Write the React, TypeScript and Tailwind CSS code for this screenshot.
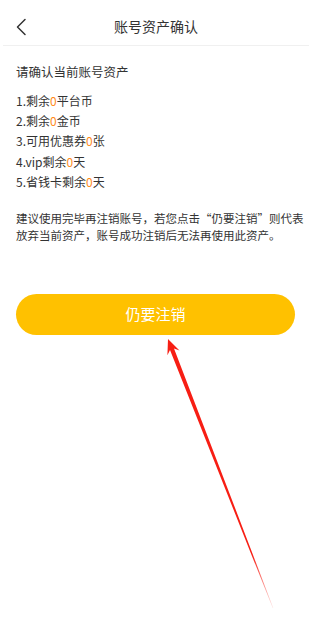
import React from "react";

const font = { fontFamily: '"Noto Sans CJK SC", "Noto Sans", sans-serif' };

function Arrow() {
  const tip = [168, 339];
  const tail = [273, 608];
  const dx = tail[0] - tip[0];
  const dy = tail[1] - tip[1];
  const len = Math.hypot(dx, dy);
  const ux = dx / len, uy = dy / len;
  const px = uy, py = -ux;
  const headLen = 15, headHalf = 6.5;
  const bc = [tip[0] + ux * headLen, tip[1] + uy * headLen];
  const notch = [tip[0] + ux * (headLen - 4), tip[1] + uy * (headLen - 4)];
  const shaftHalf = 2.2;
  const head = [
    tip,
    [bc[0] + px * headHalf, bc[1] + py * headHalf],
    [notch[0] + px * shaftHalf, notch[1] + py * shaftHalf],
    [tail[0] + px * 0.3, tail[1] + py * 0.3],
    [tail[0] - px * 0.3, tail[1] - py * 0.3],
    [notch[0] - px * shaftHalf, notch[1] - py * shaftHalf],
    [bc[0] - px * headHalf, bc[1] - py * headHalf],
  ];
  const pts = head.map((p) => `${p[0].toFixed(1)},${p[1].toFixed(1)}`).join(" ");
  return (
    <svg className="absolute left-0 top-0 pointer-events-none" width="312" height="644" viewBox="0 0 312 644">
      <defs>
        <linearGradient id="ag" gradientUnits="userSpaceOnUse" x1={tip[0]} y1={tip[1]} x2={tail[0]} y2={tail[1]}>
          <stop offset="0" stopColor="#f71e14" />
          <stop offset="0.8" stopColor="#f71e14" />
          <stop offset="1" stopColor="#f71e14" stopOpacity="0.1" />
        </linearGradient>
      </defs>
      <polygon points={pts} fill="url(#ag)" />
    </svg>
  );
}

export default function App() {
  const O = ({ children }: { children: React.ReactNode }) => (
    <span className="text-[#ff8a1c]">{children}</span>
  );
  return (
    <div className="relative w-[312px] h-[644px] bg-white overflow-hidden text-[#333333]" style={font}>
      <div className="relative h-[46px] flex items-center justify-center mx-[3px] border-b border-[#f0f0f0]">
        <svg className="absolute left-[12px] top-[18px]" width="12" height="18" viewBox="0 0 12 18">
          <path d="M10 1.5 L2.5 9 L10 16.5" fill="none" stroke="#333" strokeWidth="1.5" strokeLinecap="round" strokeLinejoin="round" />
        </svg>
        <div className="text-[14px] leading-[20px] text-[#333] mt-[6px]">账号资产确认</div>
      </div>

      <div className="px-4">
        <div className="mt-[16px] text-[12.5px] leading-[20px]">请确认当前账号资产</div>
        <div className="mt-[9px] text-[12px] leading-[20.2px]">
          <div>1.剩余<O>0</O>平台币</div>
          <div>2.剩余<O>0</O>金币</div>
          <div>3.可用优惠券<O>0</O>张</div>
          <div>4.vip剩余<O>0</O>天</div>
          <div>5.省钱卡剩余<O>0</O>天</div>
        </div>
        <div className="mt-[18px] text-[11.5px] leading-[17px] whitespace-nowrap">
          <div>建议使用完毕再注销账号，若您点击“仍要注销”则代表</div>
          <div>放弃当前资产，账号成功注销后无法再使用此资产。</div>
        </div>
        <div className="mt-[50px] mr-px h-[41px] rounded-full bg-[#ffc100] flex items-center justify-center text-white text-[15px]">
          仍要注销
        </div>
      </div>
      <Arrow />
    </div>
  );
}
